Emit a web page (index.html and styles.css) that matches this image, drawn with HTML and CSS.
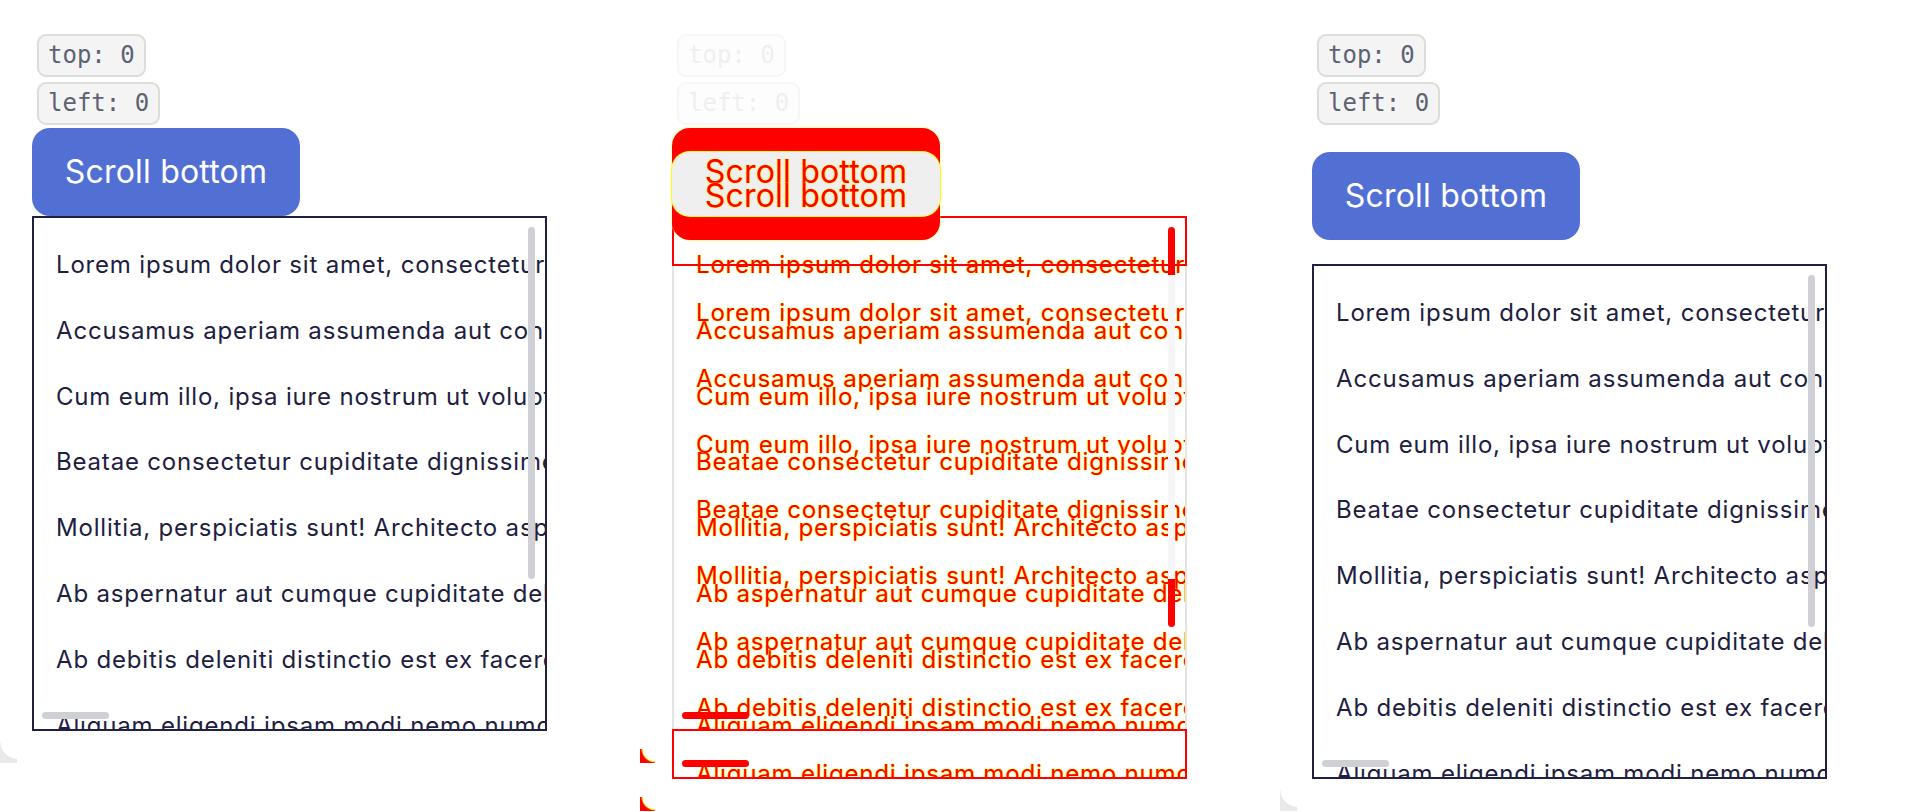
FILE: index.html
```html
<!DOCTYPE html>
<html lang="en">
<head>
<meta charset="utf-8">
<title>Scroll bottom</title>
<link rel="stylesheet" href="styles.css">
</head>
<body>
<div class="stage">

  <section class="shot">
    <div class="badges">
      <code class="badge">top: 0</code>
      <code class="badge">left: 0</code>
    </div>
    <button class="btn">Scroll bottom</button>
    <div class="box">
      <div class="content">
        <p>Lorem ipsum dolor sit amet, consectetur adipisicing elit. Quibusdam, voluptatum.</p>
        <p>Accusamus aperiam assumenda aut consequatur corporis cupiditate delectus.</p>
        <p>Cum eum illo, ipsa iure nostrum ut voluptates accusantium aliquid.</p>
        <p>Beatae consectetur cupiditate dignissimos doloremque eius eligendi.</p>
        <p>Mollitia, perspiciatis sunt! Architecto asperiores beatae commodi.</p>
        <p>Ab aspernatur aut cumque cupiditate deleniti dolorem doloribus.</p>
        <p>Ab debitis deleniti distinctio est ex facere fugiat harum.</p>
        <p>Aliquam eligendi ipsam modi nemo numquam obcaecati officia.</p>
      </div>
      <span class="thumb-v"></span>
      <span class="thumb-h"></span>
    </div>
    <div class="corner"></div>
  </section>

  <section class="shot diff">
    <div class="badges faint">
      <code class="badge">top: 0</code>
      <code class="badge">left: 0</code>
    </div>
    <div class="dbtn">
      <span class="dbtn-same"></span>
      <span class="dlabel">Scroll bottom</span>
      <span class="dlabel second">Scroll bottom</span>
    </div>
    <div class="dbox">
      <div class="dlayer">
        <div class="content">
          <p>Lorem ipsum dolor sit amet, consectetur adipisicing elit. Quibusdam, voluptatum.</p>
          <p>Accusamus aperiam assumenda aut consequatur corporis cupiditate delectus.</p>
          <p>Cum eum illo, ipsa iure nostrum ut voluptates accusantium aliquid.</p>
          <p>Beatae consectetur cupiditate dignissimos doloremque eius eligendi.</p>
          <p>Mollitia, perspiciatis sunt! Architecto asperiores beatae commodi.</p>
          <p>Ab aspernatur aut cumque cupiditate deleniti dolorem doloribus.</p>
          <p>Ab debitis deleniti distinctio est ex facere fugiat harum.</p>
          <p>Aliquam eligendi ipsam modi nemo numquam obcaecati officia.</p>
        </div>
      </div>
      <div class="dlayer second">
        <div class="content">
          <p>Lorem ipsum dolor sit amet, consectetur adipisicing elit. Quibusdam, voluptatum.</p>
          <p>Accusamus aperiam assumenda aut consequatur corporis cupiditate delectus.</p>
          <p>Cum eum illo, ipsa iure nostrum ut voluptates accusantium aliquid.</p>
          <p>Beatae consectetur cupiditate dignissimos doloremque eius eligendi.</p>
          <p>Mollitia, perspiciatis sunt! Architecto asperiores beatae commodi.</p>
          <p>Ab aspernatur aut cumque cupiditate deleniti dolorem doloribus.</p>
          <p>Ab debitis deleniti distinctio est ex facere fugiat harum.</p>
          <p>Aliquam eligendi ipsam modi nemo numquam obcaecati officia.</p>
        </div>
      </div>
      <span class="drect top"></span>
      <span class="drect bottom"></span>
      <span class="dthumb-v"></span>
      <span class="dthumb-h"></span>
      <span class="dthumb-h second"></span>
    </div>
    <span class="dcorner"></span>
    <span class="dcorner second"></span>
  </section>

  <section class="shot spaced">
    <div class="badges">
      <code class="badge">top: 0</code>
      <code class="badge">left: 0</code>
    </div>
    <button class="btn">Scroll bottom</button>
    <div class="box">
      <div class="content">
        <p>Lorem ipsum dolor sit amet, consectetur adipisicing elit. Quibusdam, voluptatum.</p>
        <p>Accusamus aperiam assumenda aut consequatur corporis cupiditate delectus.</p>
        <p>Cum eum illo, ipsa iure nostrum ut voluptates accusantium aliquid.</p>
        <p>Beatae consectetur cupiditate dignissimos doloremque eius eligendi.</p>
        <p>Mollitia, perspiciatis sunt! Architecto asperiores beatae commodi.</p>
        <p>Ab aspernatur aut cumque cupiditate deleniti dolorem doloribus.</p>
        <p>Ab debitis deleniti distinctio est ex facere fugiat harum.</p>
        <p>Aliquam eligendi ipsam modi nemo numquam obcaecati officia.</p>
      </div>
      <span class="thumb-v"></span>
      <span class="thumb-h"></span>
    </div>
    <div class="corner"></div>
  </section>

</div>
</body>
</html>
```

FILE: styles.css
```css
* { box-sizing: border-box; }

html, body {
  margin: 0;
  padding: 0;
  background: #ffffff;
}

body {
  font-family: "Inter", "Noto Sans", sans-serif;
  color: #1d2040;
}

.stage {
  display: flex;
  width: 1920px;
  height: 812px;
  overflow: hidden;
}

.shot {
  position: relative;
  flex: 0 0 640px;
  width: 640px;
  height: 812px;
  overflow: hidden;
  padding: 34px 0 0 32px;
  display: flex;
  flex-direction: column;
  align-items: flex-start;
}

/* badges */
.badges {
  display: flex;
  flex-direction: column;
  align-items: flex-start;
  gap: 5px;
  margin-left: 5px;
}

.badge {
  display: block;
  font-family: "DejaVu Sans Mono", "Liberation Mono", monospace;
  font-size: 24px;
  line-height: 29px;
  padding: 5px 9px;
  border: 2px solid #dcdcdd;
  border-radius: 9px;
  background: #f4f4f5;
  color: #5c6272;
}

.badges.faint .badge {
  border-color: #f6f6f6;
  background: #fdfdfd;
  color: #efefef;
}

/* button */
.btn {
  margin: 3px 0 0 0;
  width: 268px;
  height: 88px;
  padding: 0;
  border: 0;
  border-radius: 18px;
  background: #5270d4;
  color: #ffffff;
  font-family: "Inter", "Noto Sans", sans-serif;
  font-size: 32px;
  line-height: 88px;
  text-align: center;
  letter-spacing: 0.2px;
}

.spaced .btn {
  margin: 27px 0 24px 0;
}

/* scroll box */
.box {
  position: relative;
  width: 515px;
  height: 515px;
  border: 2px solid #1f2142;
  overflow: hidden;
  background: #fff;
}

.content {
  padding: 14px 0 0 22px;
  white-space: nowrap;
}

.content p {
  margin: 0;
  font-size: 24px;
  line-height: 65.8px;
  letter-spacing: 0.82px;
}

.thumb-v {
  position: absolute;
  top: 9px;
  right: 10px;
  width: 7px;
  height: 352px;
  border-radius: 4px;
  background: #cfd0d6;
}

.thumb-h {
  position: absolute;
  left: 8px;
  bottom: 10px;
  width: 67px;
  height: 7px;
  border-radius: 4px;
  background: #cfd0d6;
}

.corner {
  margin: 11px 0 0 -32px;
  width: 17px;
  height: 21px;
  background: radial-gradient(circle at 100% 0, rgba(255,255,255,0) 16px, #e9e9e9 17px);
}

/* diff panel */
.dbtn {
  position: relative;
  z-index: 3;
  margin-top: 3px;
  width: 268px;
  height: 112px;
  border-radius: 18px;
  background: #ff0000;
  box-shadow: 0 0 0 1px rgba(255,255,0,0.35);
}

.dbtn-same {
  position: absolute;
  left: 0;
  right: 0;
  top: 24px;
  height: 64px;
  border-radius: 18px;
  background: #efefef;
  box-shadow: 0 0 0 1px #ffff00;
}

.dlabel {
  position: absolute;
  left: 0;
  right: 0;
  top: 0;
  height: 88px;
  font-size: 32px;
  line-height: 88px;
  text-align: center;
  letter-spacing: 0.2px;
  color: #ff0000;
  text-shadow: 0 0 1px #ffff00, 0 0 1px #ffff00, 0 0 1px #ffff00;
}

.dlabel.second { top: 24px; }

.dbox {
  position: relative;
  margin-top: -24px;
  width: 515px;
  height: 563px;
  border-left: 2px solid #e4e4e4;
  border-right: 2px solid #e4e4e4;
}

.dlayer {
  position: absolute;
  left: 0;
  right: 0;
  top: 2px;
  height: 511px;
  overflow: hidden;
  color: #ff0000;
  text-shadow: 0 0 1px #ffff00, 0 0 1px #ffff00, 0 0 1px #ffff00;
}

.dlayer.second { top: 50px; }

.drect {
  position: absolute;
  left: -2px;
  right: -2px;
  height: 50px;
  border: 2px solid #ff0000;
}

.drect.top { top: 0; }
.drect.bottom { top: 513px; }

.dthumb-v {
  position: absolute;
  top: 11px;
  right: 10px;
  width: 7px;
  height: 400px;
  border-radius: 4px;
  background: linear-gradient(#ff0000 0 48px, #f6f6f6 48px 352px, #ff0000 352px);
}

.dthumb-h {
  position: absolute;
  left: 8px;
  top: 496px;
  width: 67px;
  height: 7px;
  border-radius: 4px;
  background: #ff0000;
}

.dthumb-h.second { top: 544px; }

.dcorner {
  position: absolute;
  left: 0;
  top: 749px;
  width: 15px;
  height: 14px;
  background: radial-gradient(circle at 100% 0, rgba(255,255,255,0) 12px, #ffff00 12.5px, #ff0000 14px);
}

.dcorner.second { top: 797px; }
```
